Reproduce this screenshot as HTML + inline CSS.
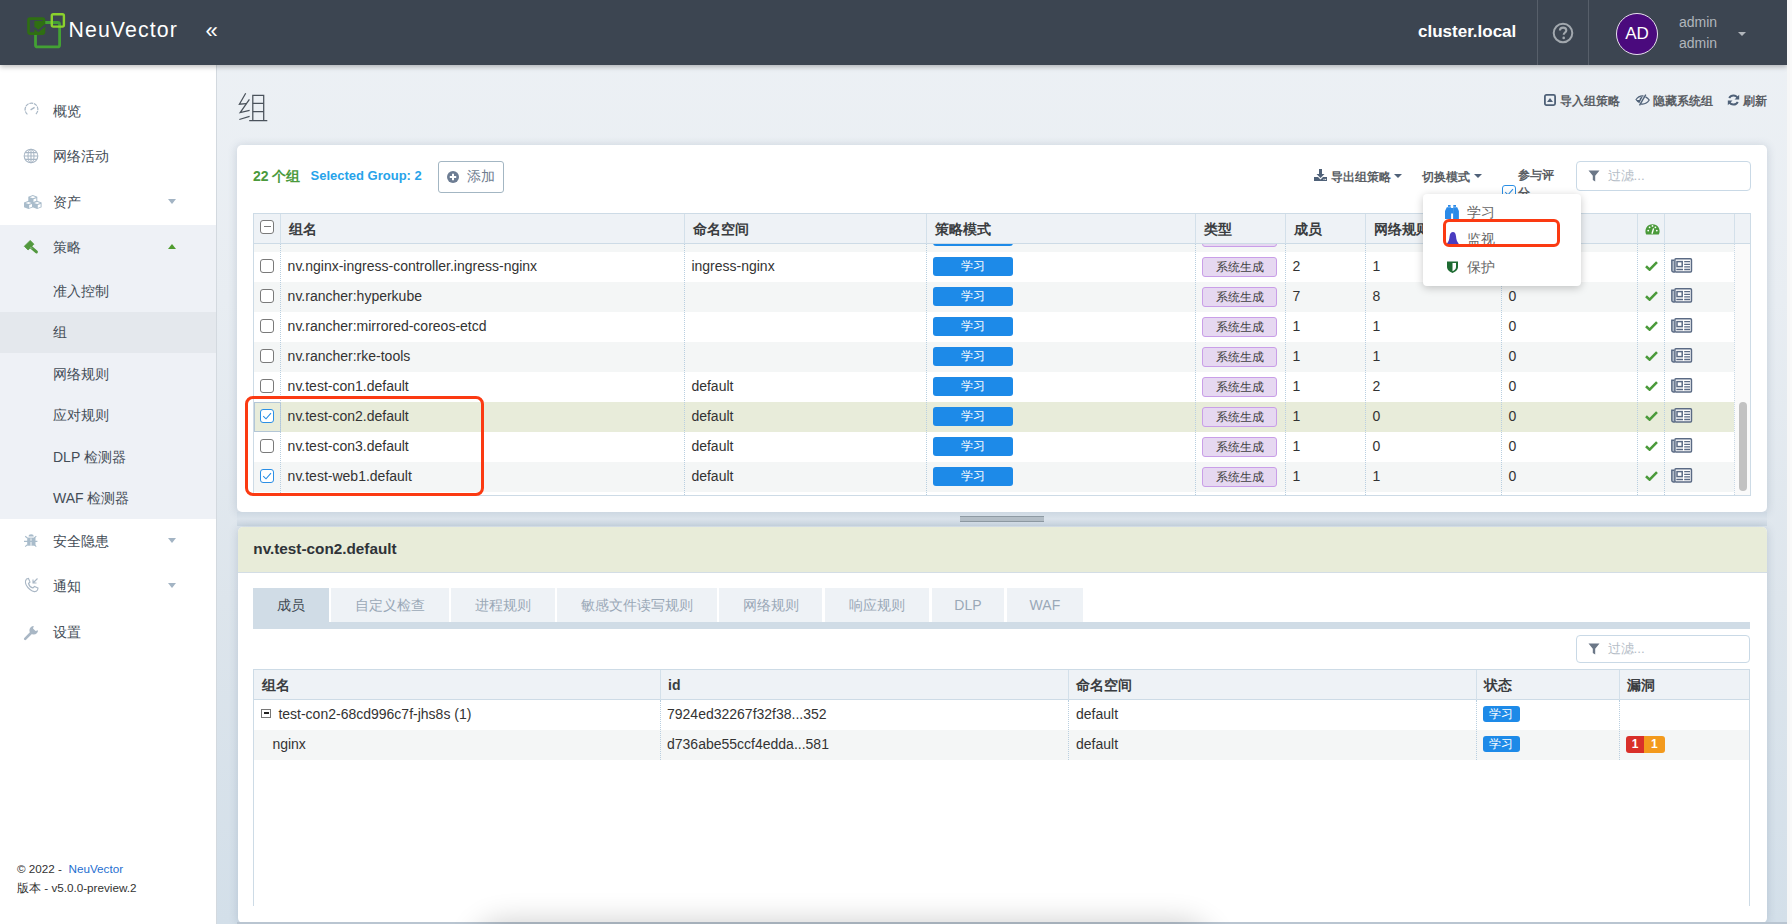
<!DOCTYPE html>
<html><head><meta charset="utf-8">
<style>
*{box-sizing:border-box}
html,body{margin:0;padding:0}
body{width:1792px;height:924px;overflow:hidden;position:relative;background:linear-gradient(#edf1f5 0px,#e8edf2 300px,#dde5ec 600px,#d3dfe9 924px);font-family:"Liberation Sans",sans-serif;color:#333}
.abs{position:absolute}
.nw{white-space:nowrap}
#hdr{left:0;top:0;width:1787px;height:65px;background:#3c4551;box-shadow:0 2px 5px rgba(0,0,0,.25);z-index:5}
#sbar{left:1787px;top:0;width:5px;height:924px;background:#f7f7f7;z-index:6;box-shadow:inset -2px 0 0 #fafafa,inset -1.5px 0 0 #dcdcdc}
#side{left:0;top:65px;width:217px;height:859px;background:#fff;border-right:1px solid #d3d9df}
.si{position:absolute;left:0;width:216px;height:45.5px;font-size:14px;color:#444d57}
.si .t{position:absolute;left:53px;top:0;line-height:45.5px}
.sub{position:absolute;left:0;width:216px;height:41.5px;font-size:14px;color:#444d57}
.sub .t{position:absolute;left:53px;top:0;line-height:41.5px}
.caret{position:absolute;left:168px;width:0;height:0;border-left:4.5px solid transparent;border-right:4.5px solid transparent}
.card{background:#fff;border-radius:5px;box-shadow:0 1px 8px 1px rgba(80,105,135,.2)}
.th{position:absolute;top:0;height:30px;line-height:30px;font-size:14px;font-weight:700;color:#3a3d40;white-space:nowrap}
.cell{position:absolute;margin-top:-0.6px;font-size:14px;color:#333;white-space:nowrap;line-height:30px}
.vl{position:absolute;width:0;border-left:1px dotted #b9cfe0}
.cb{position:absolute;margin-top:-0.8px;width:14px;height:14px;border:1.3px solid #7a7a7a;border-radius:3px;background:#fff}
.cbc{border-color:#2b8fe5}
.bl{position:absolute;width:80px;height:18.5px;background:#1d8ae8;border-radius:3px;color:#fff;font-size:12px;font-weight:500;text-align:center;line-height:18.5px}
.bp{position:absolute;width:75px;height:20px;background:#e6d8f1;border:1px solid #c99ee8;border-radius:3px;color:#3f3f3f;font-size:12px;text-align:center;line-height:18px}
.tab{position:absolute;top:588px;height:34px;line-height:34px;text-align:center;font-size:14px;color:#9aa8b7;background:#eef2f6}
</style></head>
<body>

<!-- HEADER -->
<div id="hdr" class="abs">
  <svg class="abs" style="left:22px;top:8px" width="48" height="44" viewBox="0 0 48 44">
    <rect x="13.5" y="14.5" width="24.1" height="24.4" rx="2" fill="none" stroke="#43a134" stroke-width="2.8"/>
    <rect x="29.8" y="6.2" width="12.1" height="12.4" rx="1.5" fill="none" stroke="#8bd12d" stroke-width="2.4"/>
    <rect x="6.5" y="10.6" width="15.5" height="15" rx="1.5" fill="#3c4551" stroke="#2f6f13" stroke-width="2.6"/>
    <path d="M12.4 12.9H22.2V25.8H12.4Z" fill="#2f6f13"/>
    <path d="M12.2 19.8 L16.4 23 L23.5 17" fill="none" stroke="#3c4551" stroke-width="2"/>
    <path d="M12.4 12.9 V19" stroke="#3c4551" stroke-width="0"/>
  </svg>
  <div class="abs nw" style="left:68.5px;top:17px;font-size:21.3px;letter-spacing:1.1px;color:#fff;line-height:26px">NeuVector</div>
  <div class="abs nw" style="left:205.5px;top:17.5px;font-size:22px;color:#fff;line-height:26px">&laquo;</div>
  <div class="abs nw" style="left:1418px;top:20px;font-size:17px;font-weight:700;color:#fff;line-height:24px">cluster.local</div>
  <div class="abs" style="left:1537px;top:0;width:1px;height:65px;background:#575f6a"></div>
  <div class="abs" style="left:1588px;top:0;width:1px;height:65px;background:#575f6a"></div>
  <svg class="abs" style="left:1552px;top:22px" width="22" height="22" viewBox="0 0 22 22">
    <circle cx="11" cy="11" r="9.3" fill="none" stroke="#a2a8ae" stroke-width="2"/>
    <path d="M7.9 8.6 C7.9 6.7 9.3 5.6 11.1 5.6 C13 5.6 14.3 6.8 14.3 8.4 C14.3 10.4 11.7 10.6 11.7 12.8" fill="none" stroke="#a2a8ae" stroke-width="2.1"/>
    <circle cx="11.7" cy="15.9" r="1.3" fill="#a2a8ae"/>
  </svg>
  <div class="abs" style="left:1616px;top:13px;width:42px;height:42px;border-radius:50%;background:#4a0a7d;border:1.5px solid #e8e0ee;color:#fff;font-size:17px;text-align:center;line-height:39px">AD</div>
  <div class="abs nw" style="left:1679px;top:13px;font-size:14px;color:#b1b6bc;line-height:18px">admin</div>
  <div class="abs nw" style="left:1679px;top:34px;font-size:14px;color:#b1b6bc;line-height:18px">admin</div>
  <div class="abs" style="left:1738px;top:32px;width:0;height:0;border-left:4.5px solid transparent;border-right:4.5px solid transparent;border-top:4.5px solid #b1b6bc"></div>
</div>
<div id="sbar" class="abs"></div>

<!-- SIDEBAR -->
<div id="side" class="abs">
  <div class="si" style="top:23.6px">
    <svg class="abs" style="left:23.5px;top:13.5px" width="15" height="15" viewBox="0 0 15 15"><path d="M3.4 12.4 A6.4 6.4 0 1 1 11.6 12.4" fill="none" stroke="#a9b7c5" stroke-width="1.2" stroke-dasharray="3.6 0.8"/><path d="M6.6 7.8 L10.6 5.4" stroke="#a9b7c5" stroke-width="1.4"/></svg>
    <span class="t">概览</span></div>
  <div class="si" style="top:69.1px">
    <svg class="abs" style="left:23px;top:13.5px" width="16" height="16" viewBox="0 0 16 16"><g fill="none" stroke="#a9b7c5" stroke-width="1.1"><circle cx="8" cy="8" r="6.8"/><ellipse cx="8" cy="8" rx="3" ry="6.8"/><path d="M8 1.2V14.8M1.2 8H14.8M2.2 4.6H13.8M2.2 11.4H13.8"/></g></svg>
    <span class="t">网络活动</span></div>
  <div class="si" style="top:114.6px">
    <svg class="abs" style="left:23.8px;top:15.5px" width="18" height="15" viewBox="0 0 18 15"><g transform="translate(4.3,0)"><path d="M4.5 0L9 1.8V6.4L4.5 8.2L0 6.4V1.8Z" fill="#a9bccb"/><path d="M4.5 1.1L7.5 2.2L4.5 3.3L1.5 2.2Z" fill="#fff"/><path d="M5.2 4.3L8 3.3V6L5.2 7.1Z" fill="#fff"/></g><g transform="translate(0,5.8)"><path d="M4.5 0L9 1.8V6.4L4.5 8.2L0 6.4V1.8Z" fill="#a9bccb"/><path d="M4.5 1.1L7.5 2.2L4.5 3.3L1.5 2.2Z" fill="#fff"/><path d="M5.2 4.3L8 3.3V6L5.2 7.1Z" fill="#fff"/></g><g transform="translate(8.6,5.8)"><path d="M4.5 0L9 1.8V6.4L4.5 8.2L0 6.4V1.8Z" fill="#a9bccb"/><path d="M4.5 1.1L7.5 2.2L4.5 3.3L1.5 2.2Z" fill="#fff"/><path d="M5.2 4.3L8 3.3V6L5.2 7.1Z" fill="#fff"/></g></svg>
    <span class="t">资产</span>
    <div class="caret" style="top:19px;border-top:5px solid #a3b4c4"></div></div>
  <div class="abs" style="left:0;top:160px;width:216px;height:293.5px;background:#eef1f6"></div>
  <div class="abs" style="left:0;top:246.8px;width:216px;height:40.9px;background:#e4e8ed"></div>
  <div class="si" style="top:160px">
    <svg class="abs" style="left:23px;top:15px" width="16" height="16" viewBox="0 0 16 16"><path d="M1.3 6.3 L7.2 0.4 L10.9 4.2 L5.1 10 Z" fill="#52983e" stroke="#52983e" stroke-width="0.8" stroke-linejoin="round"/><path d="M8.2 7.4 L13.4 11.9" stroke="#52983e" stroke-width="3" stroke-linecap="round"/><path d="M7.6 7.2 L9 8.6" stroke="#eef1f6" stroke-width="0.6"/></svg>
    <span class="t">策略</span>
    <div class="caret" style="top:18.5px;border-bottom:5px solid #4f9b2f"></div></div>
  <div class="sub" style="top:205.5px"><span class="t">准入控制</span></div>
  <div class="sub" style="top:247px"><span class="t">组</span></div>
  <div class="sub" style="top:288.5px"><span class="t">网络规则</span></div>
  <div class="sub" style="top:330px"><span class="t">应对规则</span></div>
  <div class="sub" style="top:371.5px"><span class="t">DLP 检测器</span></div>
  <div class="sub" style="top:413px"><span class="t">WAF 检测器</span></div>
  <div class="si" style="top:453.5px">
    <svg class="abs" style="left:24px;top:15.5px" width="14" height="14" viewBox="0 0 14 14"><path d="M4.6 2.6 A2.5 2.2 0 0 1 9.8 2.6Z" fill="#a9bccb"/><path d="M3.2 3.6H11.5V11.7H3.2Z" fill="#a9bccb"/><path d="M7 4.4V11.8" stroke="#fff" stroke-width="0.9"/><g stroke="#a9bccb" stroke-width="1.1"><path d="M0 7.4H13.4M1.2 2.2L3.4 4M12.3 2.2L10.2 4M1.2 12.6L3.4 10.7M12.3 12.6L10.2 10.7"/></g></svg>
    <span class="t">安全隐患</span>
    <div class="caret" style="top:19px;border-top:5px solid #a3b4c4"></div></div>
  <div class="si" style="top:499px">
    <svg class="abs" style="left:22.5px;top:13px" width="16" height="17" viewBox="0 0 16 17"><path d="M3.5 2 L5.5 1.5 L7 5 L5.5 6.5 C6 8.5 8 10.5 10 11 L11.5 9.5 L15 11 L14.5 13 C13 15.5 10 15 7 12.5 C4 10 2 7 2.5 4Z" fill="none" stroke="#a9b7c5" stroke-width="1.1"/><path d="M14.5 1.5 L10 6 M10 2.5 V6 H13.5" fill="none" stroke="#a9b7c5" stroke-width="1.1"/></svg>
    <span class="t">通知</span>
    <div class="caret" style="top:19px;border-top:5px solid #a3b4c4"></div></div>
  <div class="si" style="top:544.5px">
    <svg class="abs" style="left:23px;top:15px" width="16" height="16" viewBox="0 0 16 16"><path d="M2.2 13.8 L8 8" stroke="#a9b7c5" stroke-width="2.6" stroke-linecap="round"/><path d="M10.8 1 A4.3 4.3 0 1 0 15 5.2 L12.6 6 L10 3.4Z" fill="#a9b7c5"/></svg>
    <span class="t">设置</span></div>
  <div class="abs nw" style="left:17px;top:796px;font-size:11.7px;color:#333;line-height:16px">© 2022 - &nbsp;<span style="color:#1f6fd0">NeuVector</span></div>
  <div class="abs nw" style="left:17px;top:814.5px;font-size:11.7px;color:#333;line-height:16px">版本 - v5.0.0-preview.2</div>
</div>

<!-- MAIN -->
<svg class="abs" style="left:234px;top:88px" width="40" height="38" viewBox="0 0 40 38"><g fill="none" stroke="#4a525b" stroke-width="1.25" stroke-linejoin="miter"><path d="M11.7 5.3 L5.4 16.2 L12.3 15.6"/><path d="M15.4 11.3 L6.2 24.6 L15.6 22.4"/><path d="M5.3 31.5 L15.6 28.4"/><path d="M18.8 32.5 V7.3 H29.7 V32.5"/><path d="M18.8 15.4 H29.7 M18.8 23.5 H29.7 M15.2 32.5 H33.3"/></g></svg>

<!-- top actions -->
<svg class="abs" style="left:1544px;top:94px" width="12" height="12" viewBox="0 0 12 12"><rect x="0.9" y="0.9" width="10.2" height="10.2" rx="1.5" fill="none" stroke="#4f6178" stroke-width="1.8"/><path d="M3 8 L6 4 L9 8Z" fill="#4f6178"/></svg>
<div class="abs nw" style="left:1560px;top:92.8px;font-size:12px;font-weight:700;color:#5a5e64;line-height:17px">导入组策略</div>
<svg class="abs" style="left:1634.5px;top:94px" width="15" height="12" viewBox="0 0 15 12"><path d="M0.8 6 C3 2.6 6 1.8 8.5 2 M10.5 2.8 C12 3.5 13.3 4.6 14.2 6 C12 9.4 8.5 10.4 5.8 9.9" fill="none" stroke="#4f6178" stroke-width="1.3"/><path d="M0.8 6 C1.8 7.5 3 8.5 4.3 9.2 L7.8 2.6 C5.5 2.8 4.5 4.3 4.5 6Z" fill="#4f6178"/><path d="M10.8 0.6 L4.5 11.4" stroke="#4f6178" stroke-width="1.4"/></svg>
<div class="abs nw" style="left:1652.5px;top:92.8px;font-size:12px;font-weight:700;color:#5a5e64;line-height:17px">隐藏系统组</div>
<svg class="abs" style="left:1727px;top:94px" width="13" height="12" viewBox="0 0 13 12"><path d="M10.8 4.2 A4.8 4.8 0 0 0 2.2 4" fill="none" stroke="#4f6178" stroke-width="2"/><path d="M12.2 0.8 V5.5 H7.5Z" fill="#4f6178"/><path d="M2.2 7.8 A4.8 4.8 0 0 0 10.8 8" fill="none" stroke="#4f6178" stroke-width="2"/><path d="M0.8 11.2 V6.5 H5.5Z" fill="#4f6178"/></svg>
<div class="abs nw" style="left:1743px;top:92.8px;font-size:12px;font-weight:700;color:#5a5e64;line-height:17px">刷新</div>

<!-- TOP CARD -->
<div class="abs card" style="left:237px;top:145px;width:1530px;height:367px"></div>
<div class="abs nw" style="left:253px;top:167px;font-size:14px;font-weight:700;color:#4b9a3c;line-height:18px">22 个组</div>
<div class="abs nw" style="left:310.5px;top:167px;font-size:13px;font-weight:700;color:#27a3ea;line-height:18px">Selected Group: 2</div>
<div class="abs" style="left:438px;top:161px;width:66px;height:31.5px;border:1px solid #a3b6c3;border-radius:3px;background:#fff"></div>
<svg class="abs" style="left:446.5px;top:171px" width="12" height="12" viewBox="0 0 12 12"><circle cx="6" cy="6" r="6" fill="#6d7d93"/><path d="M6 2.8V9.2M2.8 6H9.2" stroke="#fff" stroke-width="2"/></svg>
<div class="abs nw" style="left:467px;top:167px;font-size:14px;color:#6f7d90;line-height:18px">添加</div>

<svg class="abs" style="left:1314px;top:169px" width="13" height="12" viewBox="0 0 13 12"><path d="M5 0H8V5H10.5L6.5 9L2.5 5H5Z" fill="#4f6178"/><path d="M0 8H4L6.5 10.5L9 8H13V12H0Z" fill="#4f6178"/><circle cx="10" cy="10.3" r="0.6" fill="#fff"/><circle cx="11.6" cy="10.3" r="0.6" fill="#fff"/></svg>
<div class="abs nw" style="left:1331px;top:168.7px;font-size:12px;font-weight:700;color:#5a5e64;line-height:17px">导出组策略</div>
<div class="abs" style="left:1394px;top:174px;width:0;height:0;border-left:4px solid transparent;border-right:4px solid transparent;border-top:4.5px solid #4f6178"></div>
<div class="abs nw" style="left:1422px;top:168.7px;font-size:12px;font-weight:700;color:#5a5e64;line-height:17px">切换模式</div>
<div class="abs" style="left:1473.5px;top:174px;width:0;height:0;border-left:4px solid transparent;border-right:4px solid transparent;border-top:4.5px solid #4f6178"></div>
<div class="abs nw" style="left:1518px;top:166.7px;font-size:12px;font-weight:700;color:#5a5e64;line-height:17px">参与评</div>
<div class="abs" style="left:1502px;top:185px;width:14px;height:14px;border:1.3px solid #2b8fe5;border-radius:3px"></div><svg class="abs" style="left:1502px;top:185px" width="14" height="14" viewBox="0 0 14 14"><path d="M3.2 7.2 L6 9.8 L11 4.2" fill="none" stroke="#2b8fe5" stroke-width="1.1"/></svg>
<div class="abs nw" style="left:1518px;top:185px;font-size:12px;font-weight:700;color:#5a5e64;line-height:17px">分</div>
<div class="abs" style="left:1576px;top:161px;width:175px;height:29.5px;border:1px solid #c9d9e6;border-radius:4px;background:#fff"></div>
<svg class="abs" style="left:1587.8px;top:170.2px" width="12" height="12" viewBox="0 0 12 12"><path d="M0.5 0.5H11.5L7.2 5.8V11.5L4.8 10V5.8Z" fill="#6b7787"/></svg>
<div class="abs nw" style="left:1607.5px;top:167px;font-size:13.3px;color:#b5bdc7;line-height:18px">过滤...</div>

<!-- TABLE 1 -->
<div class="abs" style="left:253px;top:213px;width:1498px;height:282.5px;border:1px solid #cddbe6;background:#fff"></div>
<div class="abs" style="left:254px;top:214px;width:1496px;height:29.5px;background:#eef2f6;border-bottom:1px solid #cddbe6"></div>
<div class="abs" style="left:280px;top:214px;width:1px;height:29.5px;background:#d3e0ea"></div>
<div class="abs" style="left:684px;top:214px;width:1px;height:29.5px;background:#d3e0ea"></div>
<div class="abs" style="left:926px;top:214px;width:1px;height:29.5px;background:#d3e0ea"></div>
<div class="abs" style="left:1195px;top:214px;width:1px;height:29.5px;background:#d3e0ea"></div>
<div class="abs" style="left:1285px;top:214px;width:1px;height:29.5px;background:#d3e0ea"></div>
<div class="abs" style="left:1365px;top:214px;width:1px;height:29.5px;background:#d3e0ea"></div>
<div class="abs" style="left:1501px;top:214px;width:1px;height:29.5px;background:#d3e0ea"></div>
<div class="abs" style="left:1637px;top:214px;width:1px;height:29.5px;background:#d3e0ea"></div>
<div class="abs" style="left:1664px;top:214px;width:1px;height:29.5px;background:#d3e0ea"></div>
<div class="abs" style="left:1734px;top:214px;width:1px;height:29.5px;background:#d3e0ea"></div>
<div class="th" style="left:288.5px;top:214px">组名</div>
<div class="th" style="left:693px;top:214px">命名空间</div>
<div class="th" style="left:934.6px;top:214px">策略模式</div>
<div class="th" style="left:1204px;top:214px">类型</div>
<div class="th" style="left:1294px;top:214px">成员</div>
<div class="th" style="left:1373.7px;top:214px">网络规则</div>
<div class="cb" style="left:260px;top:220.5px"></div><div class="abs" style="left:263.5px;top:226px;width:7px;height:1.3px;background:#7a7a7a"></div>
<svg class="abs" style="left:1644.5px;top:222.7px" width="15" height="12" viewBox="0 0 15 12"><path d="M1.2 11.5 A7.1 7.1 0 1 1 13.8 11.5Z" fill="#4a9a3a"/><g fill="#fff"><circle cx="3.2" cy="7.6" r="0.9"/><circle cx="4.6" cy="4.3" r="0.9"/><circle cx="7.5" cy="2.9" r="0.9"/><circle cx="10.4" cy="4.3" r="0.9"/><circle cx="11.8" cy="7.6" r="0.9"/></g><path d="M7 10.8 L8.6 5.4" stroke="#fff" stroke-width="1.4"/></svg>
<div class="abs" style="left:254px;top:243.5px;width:1480px;height:251px;overflow:hidden">
<div class="abs" style="left:0;top:0;width:1481px;height:8.5px;background:#f4f6f6"></div>
<div class="bl" style="left:678.8px;top:-16.5px"></div>
<div class="bp" style="left:948.0px;top:-17.0px"></div>
<div class="abs" style="left:0;top:8.5px;width:1481px;height:30px;background:#fff"></div>
<div class="cb" style="left:6.0px;top:16.0px"></div>
<div class="cell" style="left:33.6px;top:8.5px">nv.nginx-ingress-controller.ingress-nginx</div>
<div class="cell" style="left:437.4px;top:8.5px">ingress-nginx</div>
<div class="bl" style="left:678.8px;top:13.5px">学习</div>
<div class="bp" style="left:948.0px;top:13.0px">系统生成</div>
<div class="cell" style="left:1038.6px;top:8.5px">2</div>
<div class="cell" style="left:1118.6px;top:8.5px">1</div>
<div class="cell" style="left:1254.6px;top:8.5px">0</div>
<svg class="abs" style="left:1390.8px;top:17.7px" width="13" height="10" viewBox="0 0 13 10"><path d="M1 5.2 L4.6 8.6 L12 1.2" fill="none" stroke="#4a9a3a" stroke-width="2.6"/></svg>
<svg class="abs" style="left:1417.0px;top:14.5px" width="22" height="15" viewBox="0 0 22 15"><path d="M3.1 2.2H0.8V12.6A1.5 1.5 0 0 0 2.3 14.05H3.9" fill="#b3bcc8" stroke="#5a6a84" stroke-width="1.4"/><rect x="3.9" y="0.75" width="16.55" height="13.3" rx="1" fill="#fff" stroke="#5a6a84" stroke-width="1.5"/><rect x="6" y="3.6" width="5.2" height="5" fill="none" stroke="#5a6a84" stroke-width="1.5"/><path d="M13.2 3.7H19M13.2 6.3H19M13.2 8.9H19M5.3 11.5H12M13.2 11.5H19" stroke="#5a6a84" stroke-width="1.3"/></svg>
<div class="abs" style="left:0;top:38.5px;width:1481px;height:30px;background:#f4f6f6"></div>
<div class="cb" style="left:6.0px;top:46.0px"></div>
<div class="cell" style="left:33.6px;top:38.5px">nv.rancher:hyperkube</div>
<div class="bl" style="left:678.8px;top:43.5px">学习</div>
<div class="bp" style="left:948.0px;top:43.0px">系统生成</div>
<div class="cell" style="left:1038.6px;top:38.5px">7</div>
<div class="cell" style="left:1118.6px;top:38.5px">8</div>
<div class="cell" style="left:1254.6px;top:38.5px">0</div>
<svg class="abs" style="left:1390.8px;top:47.7px" width="13" height="10" viewBox="0 0 13 10"><path d="M1 5.2 L4.6 8.6 L12 1.2" fill="none" stroke="#4a9a3a" stroke-width="2.6"/></svg>
<svg class="abs" style="left:1417.0px;top:44.5px" width="22" height="15" viewBox="0 0 22 15"><path d="M3.1 2.2H0.8V12.6A1.5 1.5 0 0 0 2.3 14.05H3.9" fill="#b3bcc8" stroke="#5a6a84" stroke-width="1.4"/><rect x="3.9" y="0.75" width="16.55" height="13.3" rx="1" fill="#fff" stroke="#5a6a84" stroke-width="1.5"/><rect x="6" y="3.6" width="5.2" height="5" fill="none" stroke="#5a6a84" stroke-width="1.5"/><path d="M13.2 3.7H19M13.2 6.3H19M13.2 8.9H19M5.3 11.5H12M13.2 11.5H19" stroke="#5a6a84" stroke-width="1.3"/></svg>
<div class="abs" style="left:0;top:68.5px;width:1481px;height:30px;background:#fff"></div>
<div class="cb" style="left:6.0px;top:76.0px"></div>
<div class="cell" style="left:33.6px;top:68.5px">nv.rancher:mirrored-coreos-etcd</div>
<div class="bl" style="left:678.8px;top:73.5px">学习</div>
<div class="bp" style="left:948.0px;top:73.0px">系统生成</div>
<div class="cell" style="left:1038.6px;top:68.5px">1</div>
<div class="cell" style="left:1118.6px;top:68.5px">1</div>
<div class="cell" style="left:1254.6px;top:68.5px">0</div>
<svg class="abs" style="left:1390.8px;top:77.7px" width="13" height="10" viewBox="0 0 13 10"><path d="M1 5.2 L4.6 8.6 L12 1.2" fill="none" stroke="#4a9a3a" stroke-width="2.6"/></svg>
<svg class="abs" style="left:1417.0px;top:74.5px" width="22" height="15" viewBox="0 0 22 15"><path d="M3.1 2.2H0.8V12.6A1.5 1.5 0 0 0 2.3 14.05H3.9" fill="#b3bcc8" stroke="#5a6a84" stroke-width="1.4"/><rect x="3.9" y="0.75" width="16.55" height="13.3" rx="1" fill="#fff" stroke="#5a6a84" stroke-width="1.5"/><rect x="6" y="3.6" width="5.2" height="5" fill="none" stroke="#5a6a84" stroke-width="1.5"/><path d="M13.2 3.7H19M13.2 6.3H19M13.2 8.9H19M5.3 11.5H12M13.2 11.5H19" stroke="#5a6a84" stroke-width="1.3"/></svg>
<div class="abs" style="left:0;top:98.5px;width:1481px;height:30px;background:#f4f6f6"></div>
<div class="cb" style="left:6.0px;top:106.0px"></div>
<div class="cell" style="left:33.6px;top:98.5px">nv.rancher:rke-tools</div>
<div class="bl" style="left:678.8px;top:103.5px">学习</div>
<div class="bp" style="left:948.0px;top:103.0px">系统生成</div>
<div class="cell" style="left:1038.6px;top:98.5px">1</div>
<div class="cell" style="left:1118.6px;top:98.5px">1</div>
<div class="cell" style="left:1254.6px;top:98.5px">0</div>
<svg class="abs" style="left:1390.8px;top:107.7px" width="13" height="10" viewBox="0 0 13 10"><path d="M1 5.2 L4.6 8.6 L12 1.2" fill="none" stroke="#4a9a3a" stroke-width="2.6"/></svg>
<svg class="abs" style="left:1417.0px;top:104.5px" width="22" height="15" viewBox="0 0 22 15"><path d="M3.1 2.2H0.8V12.6A1.5 1.5 0 0 0 2.3 14.05H3.9" fill="#b3bcc8" stroke="#5a6a84" stroke-width="1.4"/><rect x="3.9" y="0.75" width="16.55" height="13.3" rx="1" fill="#fff" stroke="#5a6a84" stroke-width="1.5"/><rect x="6" y="3.6" width="5.2" height="5" fill="none" stroke="#5a6a84" stroke-width="1.5"/><path d="M13.2 3.7H19M13.2 6.3H19M13.2 8.9H19M5.3 11.5H12M13.2 11.5H19" stroke="#5a6a84" stroke-width="1.3"/></svg>
<div class="abs" style="left:0;top:128.5px;width:1481px;height:30px;background:#fff"></div>
<div class="cb" style="left:6.0px;top:136.0px"></div>
<div class="cell" style="left:33.6px;top:128.5px">nv.test-con1.default</div>
<div class="cell" style="left:437.4px;top:128.5px">default</div>
<div class="bl" style="left:678.8px;top:133.5px">学习</div>
<div class="bp" style="left:948.0px;top:133.0px">系统生成</div>
<div class="cell" style="left:1038.6px;top:128.5px">1</div>
<div class="cell" style="left:1118.6px;top:128.5px">2</div>
<div class="cell" style="left:1254.6px;top:128.5px">0</div>
<svg class="abs" style="left:1390.8px;top:137.7px" width="13" height="10" viewBox="0 0 13 10"><path d="M1 5.2 L4.6 8.6 L12 1.2" fill="none" stroke="#4a9a3a" stroke-width="2.6"/></svg>
<svg class="abs" style="left:1417.0px;top:134.5px" width="22" height="15" viewBox="0 0 22 15"><path d="M3.1 2.2H0.8V12.6A1.5 1.5 0 0 0 2.3 14.05H3.9" fill="#b3bcc8" stroke="#5a6a84" stroke-width="1.4"/><rect x="3.9" y="0.75" width="16.55" height="13.3" rx="1" fill="#fff" stroke="#5a6a84" stroke-width="1.5"/><rect x="6" y="3.6" width="5.2" height="5" fill="none" stroke="#5a6a84" stroke-width="1.5"/><path d="M13.2 3.7H19M13.2 6.3H19M13.2 8.9H19M5.3 11.5H12M13.2 11.5H19" stroke="#5a6a84" stroke-width="1.3"/></svg>
<div class="abs" style="left:0;top:158.5px;width:1481px;height:30px;background:#e8ecda"></div>
<div class="abs" style="left:0.3px;top:158.8px;width:26.6px;height:29.5px;border:1px solid #b3c6d6"></div>
<div class="cb cbc" style="left:6.0px;top:166.0px"></div>
<svg class="abs" style="left:6.0px;top:165.2px" width="14" height="14" viewBox="0 0 14 14"><path d="M3.2 7.2 L6 9.8 L11 4.2" fill="none" stroke="#2b8fe5" stroke-width="1.1"/></svg>
<div class="cell" style="left:33.6px;top:158.5px">nv.test-con2.default</div>
<div class="cell" style="left:437.4px;top:158.5px">default</div>
<div class="bl" style="left:678.8px;top:163.5px">学习</div>
<div class="bp" style="left:948.0px;top:163.0px">系统生成</div>
<div class="cell" style="left:1038.6px;top:158.5px">1</div>
<div class="cell" style="left:1118.6px;top:158.5px">0</div>
<div class="cell" style="left:1254.6px;top:158.5px">0</div>
<svg class="abs" style="left:1390.8px;top:167.7px" width="13" height="10" viewBox="0 0 13 10"><path d="M1 5.2 L4.6 8.6 L12 1.2" fill="none" stroke="#4a9a3a" stroke-width="2.6"/></svg>
<svg class="abs" style="left:1417.0px;top:164.5px" width="22" height="15" viewBox="0 0 22 15"><path d="M3.1 2.2H0.8V12.6A1.5 1.5 0 0 0 2.3 14.05H3.9" fill="#b3bcc8" stroke="#5a6a84" stroke-width="1.4"/><rect x="3.9" y="0.75" width="16.55" height="13.3" rx="1" fill="#fff" stroke="#5a6a84" stroke-width="1.5"/><rect x="6" y="3.6" width="5.2" height="5" fill="none" stroke="#5a6a84" stroke-width="1.5"/><path d="M13.2 3.7H19M13.2 6.3H19M13.2 8.9H19M5.3 11.5H12M13.2 11.5H19" stroke="#5a6a84" stroke-width="1.3"/></svg>
<div class="abs" style="left:0;top:188.5px;width:1481px;height:30px;background:#fff"></div>
<div class="cb" style="left:6.0px;top:196.0px"></div>
<div class="cell" style="left:33.6px;top:188.5px">nv.test-con3.default</div>
<div class="cell" style="left:437.4px;top:188.5px">default</div>
<div class="bl" style="left:678.8px;top:193.5px">学习</div>
<div class="bp" style="left:948.0px;top:193.0px">系统生成</div>
<div class="cell" style="left:1038.6px;top:188.5px">1</div>
<div class="cell" style="left:1118.6px;top:188.5px">0</div>
<div class="cell" style="left:1254.6px;top:188.5px">0</div>
<svg class="abs" style="left:1390.8px;top:197.7px" width="13" height="10" viewBox="0 0 13 10"><path d="M1 5.2 L4.6 8.6 L12 1.2" fill="none" stroke="#4a9a3a" stroke-width="2.6"/></svg>
<svg class="abs" style="left:1417.0px;top:194.5px" width="22" height="15" viewBox="0 0 22 15"><path d="M3.1 2.2H0.8V12.6A1.5 1.5 0 0 0 2.3 14.05H3.9" fill="#b3bcc8" stroke="#5a6a84" stroke-width="1.4"/><rect x="3.9" y="0.75" width="16.55" height="13.3" rx="1" fill="#fff" stroke="#5a6a84" stroke-width="1.5"/><rect x="6" y="3.6" width="5.2" height="5" fill="none" stroke="#5a6a84" stroke-width="1.5"/><path d="M13.2 3.7H19M13.2 6.3H19M13.2 8.9H19M5.3 11.5H12M13.2 11.5H19" stroke="#5a6a84" stroke-width="1.3"/></svg>
<div class="abs" style="left:0;top:218.5px;width:1481px;height:30px;background:#f4f6f6"></div>
<div class="cb cbc" style="left:6.0px;top:226.0px"></div>
<svg class="abs" style="left:6.0px;top:225.2px" width="14" height="14" viewBox="0 0 14 14"><path d="M3.2 7.2 L6 9.8 L11 4.2" fill="none" stroke="#2b8fe5" stroke-width="1.1"/></svg>
<div class="cell" style="left:33.6px;top:218.5px">nv.test-web1.default</div>
<div class="cell" style="left:437.4px;top:218.5px">default</div>
<div class="bl" style="left:678.8px;top:223.5px">学习</div>
<div class="bp" style="left:948.0px;top:223.0px">系统生成</div>
<div class="cell" style="left:1038.6px;top:218.5px">1</div>
<div class="cell" style="left:1118.6px;top:218.5px">1</div>
<div class="cell" style="left:1254.6px;top:218.5px">0</div>
<svg class="abs" style="left:1390.8px;top:227.7px" width="13" height="10" viewBox="0 0 13 10"><path d="M1 5.2 L4.6 8.6 L12 1.2" fill="none" stroke="#4a9a3a" stroke-width="2.6"/></svg>
<svg class="abs" style="left:1417.0px;top:224.5px" width="22" height="15" viewBox="0 0 22 15"><path d="M3.1 2.2H0.8V12.6A1.5 1.5 0 0 0 2.3 14.05H3.9" fill="#b3bcc8" stroke="#5a6a84" stroke-width="1.4"/><rect x="3.9" y="0.75" width="16.55" height="13.3" rx="1" fill="#fff" stroke="#5a6a84" stroke-width="1.5"/><rect x="6" y="3.6" width="5.2" height="5" fill="none" stroke="#5a6a84" stroke-width="1.5"/><path d="M13.2 3.7H19M13.2 6.3H19M13.2 8.9H19M5.3 11.5H12M13.2 11.5H19" stroke="#5a6a84" stroke-width="1.3"/></svg>
<div class="vl" style="left:26px;top:0;height:251px"></div>
<div class="vl" style="left:430px;top:0;height:251px"></div>
<div class="vl" style="left:672px;top:0;height:251px"></div>
<div class="vl" style="left:941px;top:0;height:251px"></div>
<div class="vl" style="left:1031px;top:0;height:251px"></div>
<div class="vl" style="left:1111px;top:0;height:251px"></div>
<div class="vl" style="left:1247px;top:0;height:251px"></div>
<div class="vl" style="left:1383px;top:0;height:251px"></div>
<div class="vl" style="left:1410px;top:0;height:251px"></div>
</div>
<div class="abs" style="left:1734px;top:243.5px;width:16px;height:251px;background:#fafafa;border-left:1px dotted #c9d9e6"></div>
<div class="abs" style="left:1738.6px;top:402.3px;width:8.4px;height:88.6px;background:#c2c2c2;border-radius:4px"></div>
<!-- SPLITTER -->
<div class="abs" style="left:237px;top:511.7px;width:1530px;height:14.8px;background:linear-gradient(#cdd8e2,#dbe3eb 50%,#cdd8e2)"></div>
<div class="abs" style="left:960px;top:516.2px;width:84px;height:5.8px;background:#b4bec6;border-top:1.3px solid #8e9aa3;border-bottom:1.3px solid #8e9aa3"></div>
<!-- BOTTOM CARD -->
<div class="abs card" style="left:237.5px;top:526.5px;width:1529.5px;height:396px;border-radius:5px 5px 5px 5px;overflow:hidden"><div class="abs" style="left:0;top:0;width:100%;height:46px;background:#e8ecd9;border-bottom:1px solid #d3dde5"></div></div>
<div class="abs" style="left:237px;top:922.4px;width:1550px;height:1.6px;background:#b9c5d1"></div>
<div class="abs nw" style="left:253.3px;top:538.5px;font-size:15.3px;font-weight:700;color:#2f3338;line-height:20px">nv.test-con2.default</div>
<div class="abs" style="left:253.2px;top:621.9px;width:1497.2px;height:6.8px;background:#d0dce6"></div>
<div class="tab" style="left:253.2px;width:75.5px;background:#d0dce6;color:#444c55">成员</div>
<div class="tab" style="left:331px;width:117.9px;">自定义检查</div>
<div class="tab" style="left:451.2px;width:103.7px;">进程规则</div>
<div class="tab" style="left:557.2px;width:159.9px;">敏感文件读写规则</div>
<div class="tab" style="left:719.1px;width:103.2px;">网络规则</div>
<div class="tab" style="left:824.8px;width:104.3px;">响应规则</div>
<div class="tab" style="left:931.5px;width:72.8px;">DLP</div>
<div class="tab" style="left:1006.8px;width:76.2px;">WAF</div>
<div class="abs" style="left:1576px;top:634.7px;width:174.4px;height:28.6px;border:1px solid #c9d9e6;border-radius:4px;background:#fff"></div>
<svg class="abs" style="left:1587.8px;top:643px" width="12" height="12" viewBox="0 0 12 12"><path d="M0.5 0.5H11.5L7.2 5.8V11.5L4.8 10V5.8Z" fill="#6b7787"/></svg>
<div class="abs nw" style="left:1607.5px;top:640px;font-size:13.3px;color:#b5bdc7;line-height:18px">过滤...</div>
<div class="abs" style="left:253.3px;top:669.3px;width:1497.1px;height:237px;border:1px solid #cddbe6;border-bottom:none"></div>
<div class="abs" style="left:254.3px;top:670.3px;width:1495.1px;height:29.5px;background:#eef2f6;border-bottom:1px solid #cddbe6"></div>
<div class="abs" style="left:660px;top:670.3px;width:1px;height:29.5px;background:#d3e0ea"></div>
<div class="abs" style="left:1068px;top:670.3px;width:1px;height:29.5px;background:#d3e0ea"></div>
<div class="abs" style="left:1476px;top:670.3px;width:1px;height:29.5px;background:#d3e0ea"></div>
<div class="abs" style="left:1619px;top:670.3px;width:1px;height:29.5px;background:#d3e0ea"></div>
<div class="th" style="left:261.5px;top:670px">组名</div>
<div class="th" style="left:668px;top:670px;font-weight:700">id</div>
<div class="th" style="left:1076px;top:670px">命名空间</div>
<div class="th" style="left:1484px;top:670px">状态</div>
<div class="th" style="left:1627px;top:670px">漏洞</div>
<div class="abs" style="left:254.3px;top:729.7px;width:1495.1px;height:30px;background:#f4f6f6"></div>
<div class="vl" style="left:660px;top:700px;height:60px"></div>
<div class="vl" style="left:1068px;top:700px;height:60px"></div>
<div class="vl" style="left:1476px;top:700px;height:60px"></div>
<div class="vl" style="left:1619px;top:700px;height:60px"></div>
<div class="abs" style="left:261.3px;top:708.5px;width:9.3px;height:9.3px;border:1px solid #777;background:#fff"></div><div class="abs" style="left:263.5px;top:712.4px;width:5px;height:1.6px;background:#222"></div>
<div class="cell" style="left:278.4px;top:699.7px">test-con2-68cd996c7f-jhs8s (1)</div>
<div class="cell" style="left:667px;top:699.7px">7924ed32267f32f38...352</div>
<div class="cell" style="left:1076px;top:699.7px">default</div>
<div class="bl" style="left:1482.8px;top:705.8px;width:36.8px;height:16.3px;line-height:16.3px;font-size:12px">学习</div>
<div class="cell" style="left:272.4px;top:729.7px">nginx</div>
<div class="cell" style="left:667px;top:729.7px">d736abe55ccf4edda...581</div>
<div class="cell" style="left:1076px;top:729.7px">default</div>
<div class="bl" style="left:1482.8px;top:736px;width:36.8px;height:16.3px;line-height:16.3px;font-size:12px">学习</div>
<div class="abs" style="left:1625.8px;top:736.4px;width:18.4px;height:16.4px;background:#d9302a;border-radius:3px 0 0 3px;color:#fff;font-size:12px;font-weight:700;text-align:center;line-height:16.4px">1</div>
<div class="abs" style="left:1644.2px;top:736.4px;width:20.4px;height:16.4px;background:#f39a1d;border-radius:0 3px 3px 0;color:#fff;font-size:12px;font-weight:700;text-align:center;line-height:16.4px">1</div>
<div class="abs" style="left:485px;top:933px;width:715px;height:40px;border-radius:24px;background:#000;box-shadow:0 0 30px 11px rgba(0,0,0,.2)"></div>
<!-- DROPDOWN -->
<div class="abs" style="left:1423px;top:193.5px;width:158px;height:92px;background:#fff;border-radius:4px;box-shadow:0 2px 8px rgba(0,0,0,.22);overflow:hidden"><svg class="abs" style="left:22px;top:11.5px" width="14" height="14" viewBox="0 0 14 14"><g fill="#2a8ae8"><rect x="3" y="0" width="2.6" height="1.8"/><rect x="8.3" y="0" width="2.7" height="1.8"/><path d="M1.8 2.2H6.1V13.9H0V6Z"/><path d="M8.1 2.2H12.2L13.9 6V13.9H8.1Z"/><rect x="6" y="3" width="2.2" height="5.5"/></g></svg><div class="abs nw" style="left:44.2px;top:9px;font-size:14px;color:#666;line-height:18px">学习</div><div class="abs" style="left:0;top:0;width:158px;height:50.5px;overflow:hidden"><svg class="abs" style="left:23.5px;top:38.4px" width="12" height="13" viewBox="0 0 12 13"><path d="M6 0 C7.6 0 8.8 1.6 9 4.2 C9.3 7.6 10 9.6 11.6 11.4 V13 H0 V11.4 C1.6 9.6 2.3 7.6 2.6 4.2 C2.8 1.6 4.4 0 6 0Z" fill="#4a3cc0"/></svg><div class="abs nw" style="left:44.2px;top:36px;font-size:14px;color:#666;line-height:18px">监视</div></div><svg class="abs" style="left:23.5px;top:67.5px" width="11" height="12" viewBox="0 0 11 12"><path d="M0 0.5 H11 V6 C11 9 8 11 5.5 12 C3 11 0 9 0 6Z" fill="#1e6b32"/><path d="M5.5 2 H9 V6 C9 8 7.5 9.5 5.5 10.2Z" fill="#fff"/></svg><div class="abs nw" style="left:44.2px;top:64.5px;font-size:14px;color:#666;line-height:18px">保护</div></div>
<!-- RED BOXES -->
<div class="abs" style="left:1443.3px;top:219.3px;width:116.3px;height:27.8px;border:3px solid #fb3a12;border-radius:6px"></div>
<div class="abs" style="left:245.4px;top:396px;width:238.5px;height:99.7px;border:3px solid #fb3a12;border-radius:8px"></div>

</body></html>
